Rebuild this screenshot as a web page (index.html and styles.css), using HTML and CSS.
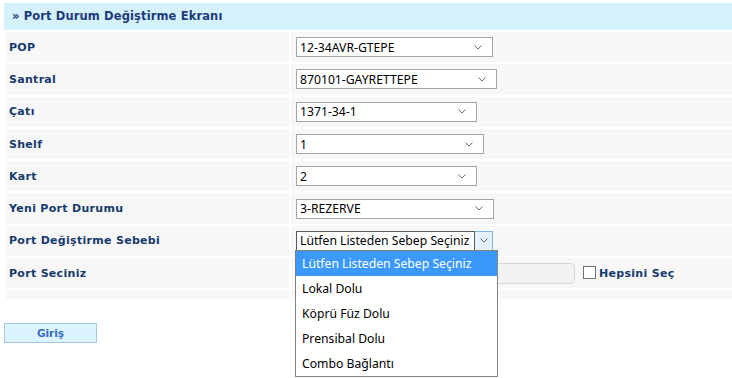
FILE: index.html
```html
<!DOCTYPE html>
<html lang="tr">
<head>
    <meta charset="UTF-8">
    <title>Port Durum Değiştirme Ekranı</title>
    <link rel="stylesheet" href="styles.css">
</head>
<body>
    <div class="page">
        <div class="title">» Port Durum Değiştirme Ekranı</div>

        <div class="form">
            <div class="row">
                <div class="lbl">POP</div>
                <div class="val"><div class="sel w197"><span>12-34AVR-GTEPE</span><svg class="chev" viewBox="0 0 8 5"><path d="M0.5 0.5 L4 4 L7.5 0.5"/></svg></div></div>
            </div>
            <div class="row">
                <div class="lbl">Santral</div>
                <div class="val"><div class="sel w201"><span>870101-GAYRETTEPE</span><svg class="chev" viewBox="0 0 8 5"><path d="M0.5 0.5 L4 4 L7.5 0.5"/></svg></div></div>
            </div>
            <div class="row">
                <div class="lbl">Çatı</div>
                <div class="val"><div class="sel w181"><span>1371-34-1</span><svg class="chev" viewBox="0 0 8 5"><path d="M0.5 0.5 L4 4 L7.5 0.5"/></svg></div></div>
            </div>
            <div class="row">
                <div class="lbl">Shelf</div>
                <div class="val"><div class="sel w188"><span>1</span><svg class="chev" viewBox="0 0 8 5"><path d="M0.5 0.5 L4 4 L7.5 0.5"/></svg></div></div>
            </div>
            <div class="row">
                <div class="lbl">Kart</div>
                <div class="val"><div class="sel w181"><span>2</span><svg class="chev" viewBox="0 0 8 5"><path d="M0.5 0.5 L4 4 L7.5 0.5"/></svg></div></div>
            </div>
            <div class="row">
                <div class="lbl">Yeni Port Durumu</div>
                <div class="val"><div class="sel w198"><span>3-REZERVE</span><svg class="chev" viewBox="0 0 8 5"><path d="M0.5 0.5 L4 4 L7.5 0.5"/></svg></div></div>
            </div>
            <div class="row">
                <div class="lbl">Port Değiştirme Sebebi</div>
                <div class="val">
                    <div class="sel open">
                        <span class="open-text">Lütfen Listeden Sebep Seçiniz</span>
                        <span class="open-btn"><svg class="chev" viewBox="0 0 8 5"><path d="M0.5 0.5 L4 4 L7.5 0.5"/></svg></span>
                        <ul class="menu">
                            <li class="active">Lütfen Listeden Sebep Seçiniz</li>
                            <li>Lokal Dolu</li>
                            <li>Köprü Füz Dolu</li>
                            <li>Prensibal Dolu</li>
                            <li>Combo Bağlantı</li>
                        </ul>
                    </div>
                </div>
            </div>
            <div class="row">
                <div class="lbl">Port Seciniz</div>
                <div class="val">
                    <div class="ports"></div>
                    <label class="check"><span class="box"></span>Hepsini Seç</label>
                </div>
            </div>
            <div class="row strip">
                <div class="lbl"></div>
                <div class="val"></div>
            </div>
        </div>

        <div class="actions">
            <button class="btn">Giriş</button>
        </div>
    </div>
</body>
</html>
```

FILE: styles.css
```css
html, body {
    min-height: 100%;
}

body {
    margin: 0;
    padding: 0;
    min-height: 378px;
    background-color: #fff;
    font-family: "DejaVu Sans", Verdana, sans-serif;
}

.page {
    padding: 3px 0 0 4px;
}

.title {
    height: 27px;
    line-height: 27px;
    padding-left: 8px;
    background-color: #d5f1fc;
    color: #1d3b7a;
    font-size: 11.5px;
    font-weight: bold;
    letter-spacing: 0.12px;
}

.form {
    display: flex;
    flex-direction: column;
    gap: 2px;
    margin-top: 2px;
    padding-left: 2px;
}

.row {
    display: grid;
    grid-template-columns: 283px 1fr;
    column-gap: 2px;
    height: 30.3px;
}

.row.strip {
    height: 9px;
}

.lbl, .val {
    background-color: #f7f7f7;
    display: flex;
    align-items: center;
}

.lbl {
    padding-left: 3px;
    color: #163a6b;
    font-size: 11px;
    font-weight: bold;
    letter-spacing: 0.3px;
}

.val {
    padding-left: 5px;
}

.sel {
    position: relative;
    box-sizing: border-box;
    height: 20px;
    display: flex;
    align-items: center;
    justify-content: space-between;
    padding: 0 10px 0 3px;
    border: 1px solid #a5a5a5;
    background-color: #fff;
    font-family: "Noto Sans", sans-serif;
    font-size: 12.2px;
    color: #000;
}

.w181 { width: 181px; }
.w188 { width: 188px; }
.w197 { width: 197px; }
.w198 { width: 198px; }
.w201 { width: 201px; }

.chev {
    width: 8px;
    height: 5px;
    fill: none;
    stroke: #6d6d6d;
    stroke-width: 1;
}

.sel.open {
    width: 197px;
    padding: 0;
    border: none;
    background: transparent;
    justify-content: flex-start;
}

.open-text {
    box-sizing: border-box;
    height: 20px;
    width: 179px;
    padding-left: 3px;
    line-height: 18px;
    border: 1px solid #5b5b5b;
    background-color: #fff;
    white-space: nowrap;
    overflow: hidden;
}

.open-btn {
    box-sizing: border-box;
    height: 20px;
    width: 18px;
    display: flex;
    align-items: center;
    justify-content: center;
    border: 1px solid #7eb4ea;
    border-left: none;
    background-color: #e5f1fb;
}

.menu {
    position: absolute;
    top: 19px;
    left: -1px;
    z-index: 5;
    width: 201px;
    margin: 0;
    padding: 0;
    list-style: none;
    border: 1px solid #828282;
    background-color: #fff;
}

.menu li {
    height: 25px;
    line-height: 25px;
    padding-left: 6px;
    white-space: nowrap;
}

.menu li.active {
    background-color: #3b99fc;
    color: #fff;
}

.ports {
    box-sizing: border-box;
    width: 279px;
    height: 21px;
    border: 1px solid #d8d8d8;
    border-radius: 4px;
    background-color: #f2f2f2;
}

.check {
    display: flex;
    align-items: center;
    margin-left: 8px;
    color: #163a6b;
    font-size: 11px;
    font-weight: bold;
    letter-spacing: 0.3px;
}

.box {
    box-sizing: border-box;
    width: 13px;
    height: 13px;
    margin-right: 3px;
    margin-top: -2px;
    border: 1px solid #707070;
    background-color: #fff;
}

.actions {
    margin-top: 23px;
}

.btn {
    width: 93px;
    height: 20px;
    padding: 0;
    border: 1px solid #a6c6de;
    background-color: #dbf4fe;
    color: #3a6cc2;
    font-family: "DejaVu Sans", Verdana, sans-serif;
    font-size: 10.5px;
    font-weight: bold;
}
```
